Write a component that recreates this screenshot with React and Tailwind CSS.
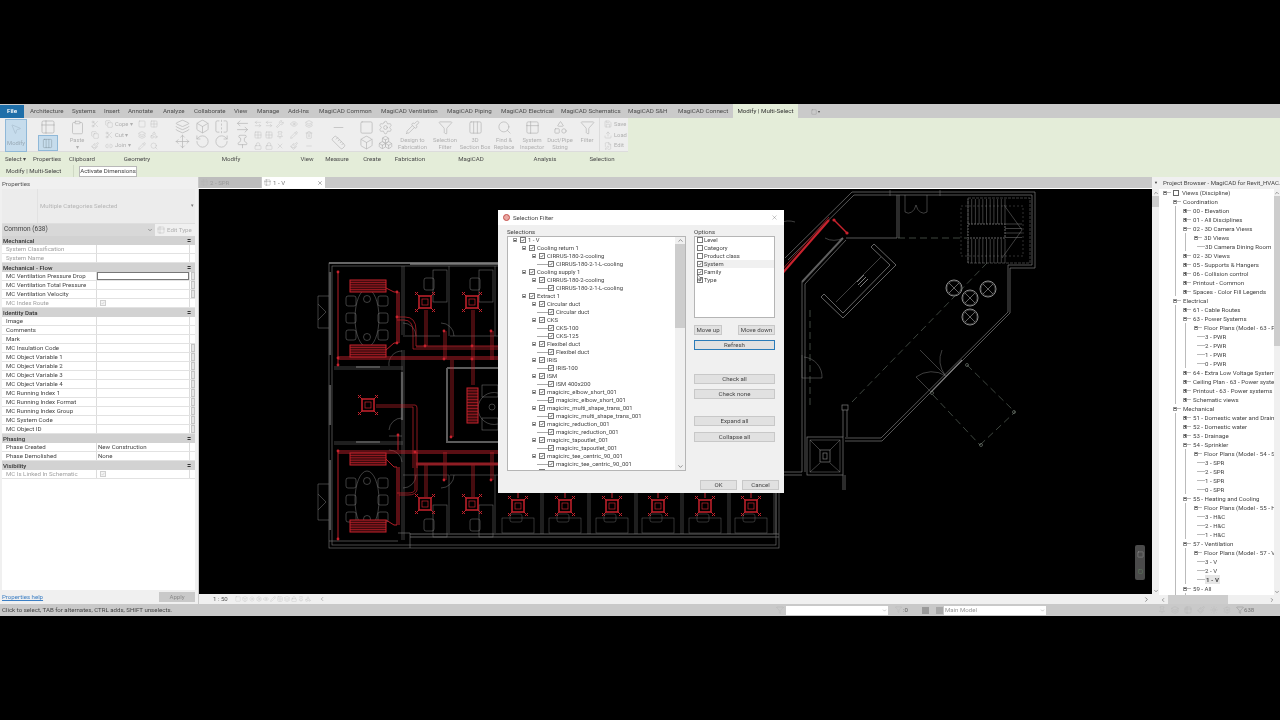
import React from "react";
import {
  MousePointer2, Clipboard, Scissors, Copy, Paintbrush, Link2, Square, Layers, Move, RotateCw, RotateCcw, ArrowLeftRight,
  FlipHorizontal, Grid2x2, Pin, X, Lock, Wrench, Trash2, Eye, Pencil, Ruler, Box, Boxes, Shapes, Search, Filter, Save, Upload,
  FilePen, Funnel, Columns3, Table2, ChevronDown, ChevronUp, ChevronLeft, ChevronRight, Sun, Settings, Pipette, Minus,
} from "lucide-react";

const tabs = [
  ["Architecture", "w-[42px]"], ["Systems", "w-[32px]"], ["Insert", "w-[24px]"], ["Annotate", "w-[35px]"], ["Analyze", "w-[31px]"],
  ["Collaborate", "w-[40px]"], ["View", "w-[23px]"], ["Manage", "w-[31px]"], ["Add-Ins", "w-[31px]"], ["MagiCAD Common", "w-[62px]"],
  ["MagiCAD Ventilation", "w-[66px]"], ["MagiCAD Piping", "w-[54px]"], ["MagiCAD Electrical", "w-[60px]"], ["MagiCAD Schematics", "w-[67px]"],
  ["MagiCAD S&H", "w-[50px]"], ["MagiCAD Connect", "w-[55px]"],
];

const G = "#b4b4b4";
const Ic = ({ I, s = 9 }) => <I size={s} color={G} strokeWidth={1.1} className="shrink-0" />;

function Small({ I, t }) {
  return (
    <div className="flex items-center gap-[2px] h-[11px] text-[5.8px] text-[#b0b0b0]">
      <Ic I={I} s={8} />
      {t && <span>{t}</span>}
    </div>
  );
}

function Big({ I, t, w = "w-[30px]", s = 15 }) {
  return (
    <div className={`flex flex-col items-center ${w} text-[5.8px] leading-[7px] text-[#b0b0b0] text-center`}>
      <div className="h-[19px] flex items-center"><Ic I={I} s={s} /></div>
      {t.map((x) => <span key={x} className="whitespace-nowrap">{x}</span>)}
    </div>
  );
}

function Col({ items, w = "" }) {
  return <div className={`flex flex-col ${w}`}>{items.map((x, i) => <Small key={i} I={x[0]} t={x[1]} />)}</div>;
}

const ribbonLabels = [
  ["Select ▾", "w-[33px] pl-[5px]"], ["Properties", "w-[26px]"], ["Clipboard", "w-[46px]"], ["Geometry", "w-[64px]"], ["Modify", "w-[124px]"],
  ["View", "w-[28px]"], ["Measure", "w-[32px]"], ["Create", "w-[38px]"], ["Fabrication", "w-[38px]"], ["MagiCAD", "w-[84px]"], ["Analysis", "w-[64px]"], ["Selection", "w-[50px]"],
];

function Ribbon() {
  return (
    <div className="h-[47px] bg-[#e4edd9] flex flex-col">
      <div className="h-[34px] flex">
        <div className="w-[628px] bg-[#eeeeee] flex items-stretch border-b border-[#dcdcdc]">
          <div className="w-[33px] pl-[5px] pt-[1px]">
            <div className="w-[22px] h-[33px] bg-[#c6dcec] border border-[#8fb8d8] flex flex-col items-center text-[5.8px] text-[#98a8b4]">
              <MousePointer2 size={12} color="#9fb2c2" strokeWidth={1} className="mt-[3px]" />
              <span className="mt-[4px]">Modify</span>
            </div>
          </div>
          <div className="w-[29px] pt-[1px] flex flex-col items-center">
            <Ic I={Table2} s={16} />
            <div className="w-[20px] h-[17px] bg-[#c6dcec] border border-[#8fb8d8] flex items-center justify-center">
              <Columns3 size={11} color="#7d8c98" strokeWidth={1} />
            </div>
          </div>
          <div className="w-[29px]"><Big I={Clipboard} t={["Paste", "▾"]} /></div>
          <Col items={[[Scissors], [Copy], [Paintbrush]]} w="w-[14px] pt-[1px]" />
          <Col items={[[Copy, "Cope ▾"], [Scissors, "Cut ▾"], [Link2, "Join ▾"]]} w="w-[33px] pt-[1px]" />
          <Col items={[[Square], [Layers], [Pencil]]} w="w-[12px] pt-[1px]" />
          <Col items={[[Grid2x2], [Shapes], [Search]]} w="w-[22px] pt-[1px]" />
          <div className="w-[20px] flex flex-col items-center pt-[1px]"><Ic I={Layers} s={15} /><Ic I={Move} s={15} /></div>
          <div className="w-[20px] flex flex-col items-center pt-[1px]"><Ic I={Box} s={15} /><Ic I={RotateCcw} s={15} /></div>
          <div className="w-[18px] flex flex-col items-center pt-[1px]"><Ic I={FlipHorizontal} s={15} /><Ic I={RotateCw} s={15} /></div>
          <div className="w-[24px] flex flex-col items-center pt-[1px]"><Ic I={ArrowLeftRight} s={15} /><Ic I={Pin} s={15} /></div>
          <Col items={[[ArrowLeftRight], [Grid2x2], [Lock]]} w="w-[11px] pt-[1px]" />
          <Col items={[[ArrowLeftRight], [Grid2x2], [Lock]]} w="w-[11px] pt-[1px]" />
          <Col items={[[Wrench], [Pin], [X]]} w="w-[14px] pt-[1px]" />
          <Col items={[[Eye], [Pencil], [Paintbrush]]} w="w-[15px] pt-[1px]" />
          <Col items={[[Layers], [Trash2], [Minus]]} w="w-[15px] pt-[1px]" />
          <div className="w-[36px] flex flex-col items-center pt-[2px]"><Ic I={Minus} s={15} /><Ic I={Ruler} s={15} /></div>
          <div className="w-[40px] flex gap-[4px] pt-[2px] pl-[3px]">
            <div className="flex flex-col"><Ic I={Square} s={15} /><Ic I={Box} s={15} /></div>
            <div className="flex flex-col"><Ic I={Settings} s={15} /><Ic I={Boxes} s={15} /></div>
          </div>
          <Big I={Pipette} t={["Design to", "Fabrication"]} w="w-[33px]" />
          <Big I={Filter} t={["Selection", "Filter"]} w="w-[32px]" />
          <Big I={Columns3} t={["3D", "Section Box"]} w="w-[28px]" />
          <Big I={Search} t={["Find &", "Replace"]} w="w-[30px]" />
          <Big I={Table2} t={["System", "Inspector"]} w="w-[26px]" />
          <Big I={Shapes} t={["Duct/Pipe", "Sizing"]} w="w-[30px]" />
          <Big I={Funnel} t={["Filter"]} w="w-[24px]" />
          <div className="flex flex-col border-l border-[#dcdcdc] pl-[4px] pt-[1px]">
            <Small I={Save} t="Save" /><Small I={Upload} t="Load" /><Small I={FilePen} t="Edit" />
          </div>
        </div>
      </div>
      <div className="h-[13px] flex items-center text-[6.1px] text-[#4a4a4a]">
        {ribbonLabels.map(([t, w]) => (
          <div key={t} className={`${w} ${t.startsWith("Select ") ? "text-left" : "text-center"} shrink-0 whitespace-nowrap`}>{t}</div>
        ))}
      </div>
    </div>
  );
}

const C = "#7c7c7c";
const R = "#c8222d";
const DR = "#8f1d24";

function Diffuser({ x, y }) {
  return (
    <g stroke={R} fill="none" strokeWidth="1">
      <rect x={x - 6} y={y - 6} width="12" height="12" strokeWidth="1.5" />
      <rect x={x - 3} y={y - 3} width="6" height="6" strokeWidth="0.7" />
      <path d={`M${x - 6} ${y - 6}L${x - 10} ${y - 10}M${x + 6} ${y - 6}L${x + 10} ${y - 10}M${x - 6} ${y + 6}L${x - 10} ${y + 10}M${x + 6} ${y + 6}L${x + 10} ${y + 10}`} />
      <path d={`M${x - 10} ${y - 7}L${x - 7} ${y - 10}M${x + 10} ${y - 7}L${x + 7} ${y - 10}M${x - 10} ${y + 7}L${x - 7} ${y + 10}M${x + 10} ${y + 7}L${x + 7} ${y + 10}`} />
    </g>
  );
}

function Grille({ x, y, w = 36, h = 12 }) {
  const n = Math.floor(h / 3);
  return (
    <g stroke={R} strokeWidth="0.7" fill="#3a0a0d">
      <rect x={x} y={y} width={w} height={h} strokeWidth="1" />
      {Array.from({ length: n }).map((_, i) => (
        <line key={i} x1={x} x2={x + w} y1={y + (i + 1) * (h / (n + 1))} y2={y + (i + 1) * (h / (n + 1))} />
      ))}
    </g>
  );
}

function Table({ y }) {
  return (
    <g stroke={C} strokeWidth="0.5" fill="none">
      <ellipse cx="367" cy={y} rx="12" ry="29" />
      <circle cx="367" cy={y - 19} r="3.5" />
      <circle cx="367" cy={y + 19} r="3.5" />
      {[-17, 0, 17].map((d) => (
        <g key={d}>
          <rect x="346" y={y + d - 5} width="10" height="10" rx="2" />
          <rect x="378" y={y + d - 5} width="10" height="10" rx="2" />
        </g>
      ))}
    </g>
  );
}

function Desk({ x, y, flip }) {
  return (
    <g stroke={C} strokeWidth="0.5" fill="none">
      <rect x={x} y={y} width="14" height="32" />
      <rect x={x - 9} y={y + (flip ? 14 : 8)} width="10" height="12" rx="2" />
    </g>
  );
}

function Drawing() {
  return (
    <svg viewBox="199 189 953 405" className="absolute inset-0 w-full h-full">
      <g stroke={C} strokeWidth="0.6" fill="none">
        <rect x="329" y="263" width="450" height="285" />
        <rect x="332" y="266" width="444" height="279" />
        <path d="M329 263H500M410 264H500" strokeWidth="1.4" />
        <path d="M330 272V355M330 385V425M330 460V530" strokeWidth="2.2" stroke="#505050" />
        <path d="M402 266V335M402 350V540M404 266V335M404 350V540" strokeWidth="0.5" />
        <path d="M449 266V336M495 266V336M403 336H440M450 336H498" strokeWidth="0.5" />
        <path d="M334 367H403M334 369H403M334 442H403M334 444H403" strokeWidth="0.5" />
        <path d="M356 367H380M356 442H380" strokeWidth="1.8" stroke="#505050" />
        <path d="M447 368V442H498M447 368H498" strokeWidth="2" stroke="#5c5c5c" />
        <path d="M402 372V420" strokeWidth="2.2" stroke="#5c5c5c" />
        <path d="M389 366A13 13 0 0 1 402 351M389 430A13 13 0 0 1 402 418M389 436H402M402 462A13 13 0 0 0 389 450" strokeWidth="0.5" />
        <path d="M403 475H449M449 475V533M450 475H498M495 475V533" strokeWidth="0.5" />
        <path d="M416 336A13 13 0 0 0 403 323M416 475A13 13 0 0 1 403 488" strokeWidth="0.5" />
        <path d="M454 336A13 13 0 0 0 441 323M454 475A13 13 0 0 1 441 488" strokeWidth="0.5" />
        <path d="M410 534H779M410 537H779" strokeWidth="1.1" stroke="#5f5f5f" />
        <path d="M398 533H410V548M329 541H398" />
        <path d="M329 296H318V328H329M318 304L326 312L318 320M329 484H318V520H329M318 494L326 502L318 510" strokeWidth="0.5" />
      </g>
      <Table y={318} />
      <Table y={500} />
      <Desk x={433} y={270} />
      <Desk x={479} y={270} />
      <Desk x={433} y={505} flip />
      <Desk x={479} y={505} flip />
      <g stroke={C} strokeWidth="0.5" fill="none">
        <rect x="482" y="385" width="16" height="12" />
        <rect x="482" y="418" width="16" height="12" />
        <path d="M498 393A16 16 0 0 0 478 408A16 16 0 0 0 498 424" />
        <circle cx="492" cy="407" r="3" />
      </g>
      <g stroke={R} fill="none" strokeWidth="0.9">
        <path d="M338 272V365M338 359H500M338 357H500" />
        <path d="M386 288L394 292H397V343H394L386 350M399 292V343" />
        <path d="M397 317H405Q416 317 416 330V346H500M397 320H404Q413 320 413 332V349H500" strokeWidth="0.7" />
        <path d="M425 310V346M427 310V346M472 310V385M474 310V385" strokeWidth="0.7" />
        <path d="M444 331V359M446 331V359M491 331V360M493 331V360M451 360V437M453 360V437" strokeWidth="0.7" />
        <path d="M376 405H415Q417 405 417 408V468M376 407H413V468" strokeWidth="0.7" />
        <path d="M338 451H498M338 453H498M338 451V540" />
        <path d="M415 452V490Q414 493 408 493H397M417 452V490Q416 495 408 495H399" strokeWidth="0.7" />
        <path d="M386 520L394 525H397V467H394L386 459M399 467V525M398 435V450" />
        <path d="M425 463V497M427 463V497M472 463V497M474 463V497M444 452V480M446 452V480M491 452V480M493 452V480" strokeWidth="0.7" />
      </g>
      <path d="M416 464H500" stroke={DR} strokeWidth="3" />
      <path d="M416 347H500" stroke={DR} strokeWidth="1.2" />
      <g fill={R}>
        {[[338, 272], [338, 358], [338, 365], [338, 451], [338, 539], [397, 292], [397, 343], [444, 331], [491, 331], [444, 359], [451, 437], [397, 317], [444, 480], [491, 480], [398, 435], [425, 346], [472, 346], [415, 452], [472, 359]].map(([x, y], i) => (
          <circle key={i} cx={x} cy={y} r="1.4" />
        ))}
      </g>
      <Grille x={350} y={280} />
      <Grille x={350} y={345} />
      <Grille x={350} y={453} />
      <Grille x={350} y={520} />
      <Grille x={467} y={388} w={11} h={35} />
      <Diffuser x={425} y={302} />
      <Diffuser x={472} y={302} />
      <Diffuser x={368} y={405} />
      <Diffuser x={425} y={504} />
      <Diffuser x={472} y={504} />
      {[518, 565, 612, 658, 705, 751].map((x) => (
        <g key={x}>
          <Diffuser x={x} y={506} />
          <path d={`M${x} 490V498`} stroke={R} />
          <path d={`M${x + 23} 490V534M${x + 25} 490V534`} stroke={C} strokeWidth="0.5" />
          <rect x={x - 16} y={518} width="32" height="15" stroke={C} strokeWidth="0.4" fill="none" />
          <rect x={x - 8} y={514} width="12" height="8" rx="2" stroke={C} strokeWidth="0.4" fill="none" />
        </g>
      ))}

      {/* right wing */}
      <g stroke={C} strokeWidth="0.7" fill="none">
        <path d="M785 258L852 192H1035V268H1010V313L882 441H845" />
        <path d="M788 260L854 195H1032V265H1008V312L881 438H845" />
        <path d="M802 472V282L843 238" />
        <path d="M805 472V284L846 240" />
        <path d="M802 282L843 238" stroke="#5f5f5f" strokeWidth="2" />
        <path d="M897 195V238M899 195V238M846 238H897" />
        <path d="M905 195V212A8 12 0 0 0 916 205A8 12 0 0 0 927 212V195M890 190V196M940 190V196" strokeWidth="0.5" />
        <path d="M782 260A14 14 0 0 1 795 222M825 238A14 10 0 0 0 843 238" strokeWidth="0.5" />
        <path d="M874 244L896 265L843 318L821 297L824 294L843 313L890 265L871 247Z" strokeWidth="0.8" />
        <path d="M881 257L836 302" strokeWidth="0.5" />
        <path d="M858 285L866 277M860 287L868 279M857 282L864 275" strokeWidth="1" />
        <rect x="807" y="437" width="36" height="38" />
        <rect x="810" y="440" width="30" height="32" strokeWidth="0.5" />
        <path d="M810 440L820 450M840 440L830 450M810 472L820 463M840 472L830 463" strokeWidth="0.5" />
        <rect x="820" y="450" width="10" height="12" />
        <rect x="823" y="453" width="4" height="6" />
        <rect x="842" y="405" width="6" height="5" />
        <path d="M843 410V437M847 410V437" />
        <path d="M802 472H779M802 475H781M845 475V490M843 475V490" />
        <path d="M802 355V378H822A20 20 0 0 0 804 357" strokeWidth="0.5" />
        <path d="M942 350A26 26 0 0 0 945 375L920 350M946 376A26 26 0 0 0 916 377L931 392" strokeWidth="0.5" />
        <path d="M931 392L962 360" strokeWidth="1.1" />
        {[[954, 288], [988, 289], [970, 298], [970, 317]].map(([x, y]) => (
          <g key={x + "-" + y} stroke="#8c8c8c">
            <circle cx={x} cy={y} r="8" strokeWidth="1" />
            <circle cx={x} cy={y} r="7" strokeWidth="0.4" />
            <path d={`M${x - 5} ${y - 5}L${x + 5} ${y + 5}M${x + 5} ${y - 5}L${x - 5} ${y + 5}`} strokeWidth="0.7" />
          </g>
        ))}
        <rect x="968" y="198" width="62" height="65" strokeWidth="0.5" strokeDasharray="3 1" />
        <rect x="961" y="206" width="62" height="50" strokeWidth="0.4" strokeDasharray="2 2" />
      </g>
      <g stroke={C} strokeWidth="0.5">
        {Array.from({ length: 11 }).map((_, i) => (
          <g key={i}>
            <line x1={968 + i * 3.7} x2={968 + i * 3.7} y1="199" y2="224" />
            <line x1={968 + i * 3.7} x2={968 + i * 3.7} y1="239" y2="263" />
          </g>
        ))}
        {Array.from({ length: 4 }).map((_, i) => (
          <line key={i} x1="1005" x2="1022" y1={224 + i * 4.5} y2={224 + i * 4.5} />
        ))}
      </g>
      <rect x="968" y="224" width="37" height="14" fill="#000" stroke="#666" strokeWidth="1" strokeDasharray="2 1" />
      <path d="M1004 205L1022 230L1002 258" stroke={C} strokeWidth="0.5" fill="none" />
      <g stroke="#68756a" strokeWidth="0.6" strokeDasharray="7 4" fill="none">
        <path d="M898 238H967M810 310V408M852 402L987 263M933 395L980 445M967 365L1015 412M980 445L1015 412" />
      </g>
      <g stroke="#7f8a80" strokeWidth="0.6" fill="none">
        <circle cx="932" cy="393" r="1.5" /><circle cx="967" cy="365" r="1.5" /><circle cx="1014" cy="412" r="1.5" /><circle cx="981" cy="445" r="1.5" />
      </g>
      <path d="M780 276L829 220" stroke={R} strokeWidth="2.2" fill="none" />
      <path d="M780 272L829 217" stroke={DR} strokeWidth="1" fill="none" />
      <path d="M834 220L847 233" stroke={R} strokeWidth="1.4" fill="none" />
      <circle cx="834" cy="220" r="1.6" fill={R} />
      <circle cx="847" cy="233" r="1.6" fill={R} />
    </svg>
  );
}

const rows = [
  ["h", "Mechanical"], ["d", "System Classification"], ["d", "System Name"], ["h", "Mechanical - Flow"],
  ["s", "MC Ventilation Pressure Drop", "", true], ["r", "MC Ventilation Total Pressure", "", true], ["r", "MC Ventilation Velocity", "", true], ["c", "MC Index Route"],
  ["h", "Identity Data"], ["r", "Image"], ["r", "Comments"], ["r", "Mark"], ["r", "MC Insulation Code", "", true],
  ["r", "MC Object Variable 1", "", true], ["r", "MC Object Variable 2", "", true], ["r", "MC Object Variable 3", "", true], ["r", "MC Object Variable 4", "", true],
  ["r", "MC Running Index 1", "", true], ["r", "MC Running Index Format", "", true], ["r", "MC Running Index Group", "", true], ["r", "MC System Code", "", true], ["r", "MC Object ID", "", true],
  ["h", "Phasing"], ["r", "Phase Created", "New Construction"], ["r", "Phase Demolished", "None"],
  ["h", "Visibility"], ["c", "MC Is Linked In Schematic"],
];

const CheckSvg = ({ c = "#555", w = "1.3" }) => (
  <svg viewBox="0 0 8 8" className="w-full h-full block"><path d="M1.2 4.2L3.2 6.2L6.8 1.6" fill="none" stroke={c} strokeWidth={w} /></svg>
);

function PropRow({ r }) {
  const [k, a, b, btn] = r;
  if (k === "h") {
    return (
      <div className="h-[9px] bg-[#d2d2d2] flex items-center justify-between px-[1px] pr-[4px] font-medium text-[#333]">
        <span>{a}</span><span className="text-[5px] leading-none">≑</span>
      </div>
    );
  }
  const dis = k === "d" || k === "c";
  return (
    <div className="h-[9px] flex border-b border-[#e2e2e2] bg-white">
      <div className={`w-[95px] pl-[4px] border-r border-[#dcdcdc] leading-[8px] whitespace-nowrap ${dis ? "text-[#a0a0a0]" : "text-[#444]"}`}>{a}</div>
      <div className={`w-[92px] pl-[1px] leading-[8px] text-[#444] flex items-center ${k === "s" ? "border border-[#777]" : ""}`}>
        {b}
        {k === "c" && <div className="ml-[2px] w-[6px] h-[6px] border-[0.5px] border-[#cfcfcf] bg-[#f4f4f4]"><CheckSvg c="#bbb" w="1" /></div>}
      </div>
      <div className="w-[6px] border-l border-[#dcdcdc] flex justify-center">
        {btn && <div className="w-[4px] h-[8px] bg-[#e6e6e6] border-[0.5px] border-[#c4c4c4]" />}
      </div>
    </div>
  );
}

function Left() {
  return (
    <div className="w-[198px] shrink-0 flex flex-col bg-[#f0f0f0] pl-[2px] pr-[3px] text-[6.1px]">
      <div className="h-[12px] flex items-center text-[#555] pt-[1px]">Properties</div>
      <div className="h-[35px] flex bg-[#ececec] items-center text-[#b5b5b5] border-b border-[#dedede]">
        <div className="w-[36px] h-full border-r border-[#e2e2e2]" />
        <span className="pl-[2px] grow">Multiple Categories Selected</span>
        <span className="text-[5px] pr-[1px] text-[#777]">▾</span>
      </div>
      <div className="h-[12px] flex">
        <div className="w-[153px] bg-[#d8d8d8] flex items-center justify-between pl-[2px] pr-[2px] text-[#444] text-[6.5px]">
          <span>Common (638)</span><ChevronDown size={6} color="#555" />
        </div>
        <div className="grow flex items-center gap-[2px] pl-[2px] text-[#b0b0b0]">
          <Ic I={Table2} s={8} /><span>Edit Type</span>
        </div>
      </div>
      <div className="flex flex-col">
        {rows.map((r, i) => <PropRow key={i} r={r} />)}
      </div>
      <div className="grow bg-white" />
      <div className="h-[14px] flex items-center justify-between">
        <span className="text-[#3c7fc4] underline">Properties help</span>
        <div className="w-[36px] h-[10px] bg-[#c9c9c9] flex items-center justify-center text-[#8a8a8a]">Apply</div>
      </div>
    </div>
  );
}

const tree = [
  [0, "1 - V"], [1, "Cooling return 1"], [2, "CIRRUS-180-2-cooling"], [3, "CIRRUS-180-2-1-L-cooling"], [1, "Cooling supply 1"], [2, "CIRRUS-180-2-cooling"], [3, "CIRRUS-180-2-1-L-cooling"],
  [1, "Extract 1"], [2, "Circular duct"], [3, "Circular duct"], [2, "CKS"], [3, "CKS-100"], [3, "CKS-125"], [2, "Flexibel duct"], [3, "Flexibel duct"], [2, "IRIS"], [3, "IRIS-100"], [2, "ISM"], [3, "ISM 400x200"],
  [2, "magicirc_elbow_short_001"], [3, "magicirc_elbow_short_001"], [2, "magicirc_multi_shape_trans_001"], [3, "magicirc_multi_shape_trans_001"], [2, "magicirc_reduction_001"], [3, "magicirc_reduction_001"],
  [2, "magicirc_tapoutlet_001"], [3, "magicirc_tapoutlet_001"], [2, "magicirc_tee_centric_90_001"], [3, "magicirc_tee_centric_90_001"], [2, "magicirc_transition_001"],
];

const pad = ["pl-[5px]", "pl-[14px]", "pl-[24px]", "pl-[29px]"];

const Exp = ({ plus }) => (
  <span className="relative w-[4px] h-[4px] border-[0.5px] border-[#999] shrink-0 flex items-center justify-center bg-white">
    <span className="w-[3px] h-[0.5px] bg-[#555]" />
    {plus && <span className="absolute w-[0.5px] h-[3px] bg-[#555]" />}
  </span>
);

const Cb = ({ on = true }) => (
  <span className="w-[6px] h-[6px] border-[0.5px] border-[#777] bg-white shrink-0 block">{on && <CheckSvg c="#333" />}</span>
);

function Btn({ t, w = "w-full", extra = "border-[0.5px] border-[#c8c8c8]" }) {
  return <div className={`h-[10px] ${w} bg-[#e1e1e1] flex items-center justify-center text-[#444] ${extra}`}>{t}</div>;
}

function Dialog() {
  return (
    <div className="absolute left-[299px] top-[21px] w-[286px] h-[283px] bg-[#f0f0f0] flex flex-col text-[6.1px] text-[#444]">
      <div className="h-[15px] bg-white flex items-center px-[5px] shrink-0">
        <span className="w-[7px] h-[7px] rounded-full bg-[#e9a7a2] border border-[#c44f4a] mr-[3px]" />
        <span>Selection Filter</span>
        <X size={7} color="#444" strokeWidth={1} className="ml-auto mr-[1px]" />
      </div>
      <div className="flex pl-[9px]">
        <div className="w-[179px] flex flex-col">
          <div className="h-[11px] leading-[11px] pt-[1px]">Selections</div>
          <div className="h-[235px] bg-white border-[0.5px] border-[#b5b5b5] flex overflow-hidden">
            <div className="w-[169px] -mt-[1px] overflow-hidden">
              {tree.map(([l, t], i) => (
                <div key={i} className={`h-[8px] flex items-center whitespace-nowrap ${pad[l]}`}>
                  {l < 3 ? <Exp /> : <span className="w-[11px] h-[0.5px] bg-[#aaa] shrink-0" />}
                  {l < 3 && <span className="w-[3px] shrink-0" />}
                  <Cb />
                  <span className="pl-[2px] text-[5.9px]">{t}</span>
                </div>
              ))}
            </div>
            <div className="w-[10px] bg-[#f0f0f0] flex flex-col items-center">
              <ChevronUp size={7} color="#555" className="shrink-0" />
              <div className="w-full h-[84px] bg-[#cdcdcd]" />
              <div className="grow" />
              <ChevronDown size={7} color="#555" className="shrink-0" />
            </div>
          </div>
        </div>
        <div className="w-[81px] ml-[8px] flex flex-col">
          <div className="h-[11px] leading-[11px] pt-[1px]">Options</div>
          <div className="h-[82px] bg-white border-[0.5px] border-[#b5b5b5] pl-[2px]">
            {[["Level", false], ["Category", false], ["Product class", false], ["System", true, "bg-[#f0f0f0]"], ["Family", true], ["Type", true]].map(([t, on, bg]) => (
              <div key={t} className={`h-[8px] -translate-y-[1px] flex items-center gap-[1px] ${bg || ""}`}><Cb on={on} /><span className="text-[5.9px]">{t}</span></div>
            ))}
          </div>
          <div className="flex justify-between mt-[7px]">
            <Btn t="Move up" w="w-[28px]" /><Btn t="Move down" w="w-[37px]" />
          </div>
          <Btn t="Refresh" extra="mt-[5px] border border-[#2b7bb8]" />
          <Btn t="Check all" extra="mt-[24px] border-[0.5px] border-[#c8c8c8]" />
          <Btn t="Check none" extra="mt-[5px] border-[0.5px] border-[#c8c8c8]" />
          <Btn t="Expand all" extra="mt-[17px] border-[0.5px] border-[#c8c8c8]" />
          <Btn t="Collapse all" extra="mt-[6px] border-[0.5px] border-[#c8c8c8]" />
          <div className="flex gap-[5px] mt-[38px] pl-[6px] w-[85px]">
            <Btn t="OK" w="w-[37px]" /><Btn t="Cancel" w="w-[37px]" />
          </div>
        </div>
      </div>
      <svg viewBox="0 0 6 9" className="absolute left-[199px] top-[64px] w-[5px] h-[8px]"><path d="M0.5 0.5V7L2 5.6L3.2 8L4.3 7.5L3.2 5.2H5.2Z" fill="#fff" stroke="#222" strokeWidth="0.6" /></svg>
    </div>
  );
}

function Center() {
  return (
    <div className="grow min-w-0 flex flex-col text-[6.1px] bg-[#c9c9c9]">
      <div className="h-[12px] flex items-end shrink-0 border-b border-white">
        <div className="w-[62px] h-[11px] bg-[#bdbdbd] flex items-center pl-[2px] gap-[2px] text-[#9b9b9b] ml-[1px]"><Ic I={Table2} s={7} /> 2 - SPR</div>
        <div className="w-[63px] h-[11px] bg-white flex items-center pl-[2px] gap-[2px] text-[#777] ml-[1px]">
          <Table2 size={7} color="#666" strokeWidth={1} /> 1 - V
          <X size={6} color="#222" strokeWidth={1.4} className="ml-auto mr-[2px]" />
        </div>
      </div>
      <div className="relative h-[405px] bg-black shrink-0 overflow-hidden ml-[1px]">
        <Drawing />
        <div className="absolute left-[936px] top-[356px] w-[10px] h-[35px] bg-[#4a4a4a] rounded-[2px] flex flex-col items-center justify-around">
          <Square size={7} color="#cfcfcf" strokeWidth={1} />
          <Square size={5} color="#6fa36f" strokeWidth={1.4} />
        </div>
        <Dialog />
      </div>
      <div className="grow bg-[#f0f0f0] flex items-center pl-[14px] text-[#555] ml-[1px]">
        <span className="w-[22px]">1 : 50</span>
        <div className="flex gap-[1px]">
          {[Square, Box, Sun, Settings, Eye, Pencil, Grid2x2, Layers, Lock, Pin, Shapes].map((I, i) => <Ic key={i} I={I} s={6} />)}
        </div>
        <ChevronLeft size={6} color="#777" className="ml-[8px]" />
        <div className="grow" />
        <ChevronRight size={7} color="#444" className="mr-[2px]" />
      </div>
    </div>
  );
}

const browser = [
  [0, "Views (Discipline)", "m"], [1, "Coordination", "m"], [2, "00 - Elevation", "p"], [2, "01 - All Disciplines", "p"], [2, "02 - 3D Camera Views", "m"], [3, "3D Views", "m"], [4, "3D Camera Dining Room"],
  [2, "02 - 3D Views", "p"], [2, "05 - Supports & Hangers", "p"], [2, "06 - Collision control", "p"], [2, "Printout - Common", "p"], [2, "Spaces - Color Fill Legends", "p"],
  [1, "Electrical", "m"], [2, "61 - Cable Routes", "p"], [2, "63 - Power Systems", "m"], [3, "Floor Plans (Model - 63 - Power Systems)", "m"], [4, "3 - PWR"], [4, "2 - PWR"], [4, "1 - PWR"], [4, "0 - PWR"],
  [2, "64 - Extra Low Voltage Systems", "p"], [2, "Ceiling Plan - 63 - Power systems", "p"], [2, "Printout - 63 - Power systems", "p"], [2, "Schematic views", "p"],
  [1, "Mechanical", "m"], [2, "51 - Domestic water and Drainage", "p"], [2, "52 - Domestic water", "p"], [2, "53 - Drainage", "p"], [2, "54 - Sprinkler", "m"], [3, "Floor Plans (Model - 54 - Sprinkler)", "m"], [4, "3 - SPR"], [4, "2 - SPR"], [4, "1 - SPR"], [4, "0 - SPR"],
  [2, "55 - Heating and Cooling", "m"], [3, "Floor Plans (Model - 55 - Heating)", "m"], [4, "3 - H&C"], [4, "2 - H&C"], [4, "1 - H&C"],
  [2, "57 - Ventilation", "m"], [3, "Floor Plans (Model - 57 - Ventilation)", "m"], [4, "3 - V"], [4, "2 - V"], [4, "1 - V", "", true],
  [2, "59 - All", "m"], [3, "Floor Plans (Model - 59 - All)", "m"],
];

const bpad = ["pl-[4px]", "pl-[14px]", "pl-[24px]", "pl-[35px]", "pl-[46px]"];

function Right() {
  return (
    <div className="w-[128px] shrink-0 flex flex-col bg-[#f0f0f0] text-[6.1px] text-[#444]">
      <div className="h-[12px] flex items-center gap-[5px] pl-[2px] shrink-0 overflow-hidden whitespace-nowrap">
        <span className="text-[4px]">▼</span>
        <span>Project Browser - MagiCAD for Revit_HVAC...</span>
      </div>
      <div className="grow flex min-h-0">
        <div className="w-[7px] shrink-0 flex flex-col items-center">
          <ChevronUp size={6} color="#444" className="mt-[1px]" />
          <div className="w-full h-[11px] bg-[#cdcdcd]" />
          <div className="grow" />
          <ChevronDown size={6} color="#444" className="mb-[10px]" />
        </div>
        <div className="grow min-w-0 bg-white flex flex-col">
          <div className="h-[406px] flex overflow-hidden shrink-0">
            <div className="grow min-w-0 overflow-hidden -mt-[1px]">
              {browser.map(([l, t, e, b], i) => (
                <div key={i} className={`relative h-[9px] flex items-center whitespace-nowrap ${bpad[l]}`}>
                  {l >= 2 && <span className="absolute left-[16px] top-0 w-[0.5px] h-full bg-[#bbb]" />}
                  {l >= 3 && <span className="absolute left-[26px] top-0 w-[0.5px] h-full bg-[#bbb]" />}
                  {e ? <Exp plus={e === "p"} /> : <span className="absolute left-[38px] w-[8px] h-[0.5px] bg-[#bbb]" />}
                  {e && <span className="w-[4px] h-[0.5px] bg-[#bbb] shrink-0 mr-[2px]" />}
                  {l === 0 && <span className="w-[6px] h-[6px] border-[0.5px] border-dashed border-[#666] mr-[3px] shrink-0" />}
                  <span className={b ? "font-bold bg-[#e6e6e6] px-[1px]" : ""}>{t}</span>
                </div>
              ))}
            </div>
            <div className="w-[6px] shrink-0 bg-[#f0f0f0] flex flex-col items-center">
              <ChevronUp size={6} color="#444" className="mt-[1px]" />
              <div className="w-full h-[150px] bg-[#cdcdcd]" />
              <div className="grow" />
              <ChevronDown size={6} color="#444" />
            </div>
          </div>
          <div className="grow bg-[#f0f0f0] flex items-center">
            <ChevronLeft size={6} color="#444" className="ml-[1px]" />
            <div className="w-[60px] h-full bg-[#cdcdcd] ml-[2px]" />
            <div className="grow" />
            <ChevronRight size={6} color="#444" className="mr-[5px]" />
          </div>
        </div>
      </div>
    </div>
  );
}

export default function App() {
  return (
    <div className="w-[1280px] h-[720px] bg-black overflow-hidden flex flex-col pt-[104px] pb-[104px] blur-[0.25px] font-['Roboto',sans-serif]">
      <div className="h-[14px] bg-[#cacaca] flex items-end text-[6.2px] text-[#4d4d4d] shrink-0">
        <div className="w-[24px] h-[13px] bg-[#1f6fa9] text-white flex items-center justify-center font-semibold">File</div>
        <div className="w-[6px]" />
        {tabs.map(([t, w]) => <div key={t} className={`${w} h-[13px] leading-[13px] whitespace-nowrap shrink-0`}>{t}</div>)}
        <div className="w-[65px] h-[14px] bg-[#e4edd9] leading-[14px] text-center text-[#333] whitespace-nowrap">Modify | Multi-Select</div>
        <div className="ml-[13px] h-[13px] flex items-center gap-[1px]"><Square size={6} color="#777" strokeWidth={1} /><span className="text-[4px]">▾</span></div>
      </div>
      <Ribbon />
      <div className="h-[12px] bg-[#e4edd9] flex items-center text-[6.1px] text-[#444] shrink-0">
        <span className="w-[74px] pl-[6px] border-r border-[#cfd8c4] h-full flex items-center whitespace-nowrap">Modify | Multi-Select</span>
        <span className="ml-[5px] w-[58px] h-[11px] bg-white border-[0.5px] border-[#b8b8b8] flex items-center justify-center whitespace-nowrap">Activate Dimensions</span>
      </div>
      <div className="h-[427px] flex shrink-0 bg-[#c9c9c9]">
        <Left />
        <Center />
        <Right />
      </div>
      <div className="h-[12px] bg-[#c9c9c9] flex items-center text-[6.1px] text-[#444] shrink-0 pl-[2px]">
        <span className="w-[774px] whitespace-nowrap">Click to select, TAB for alternates, CTRL adds, SHIFT unselects.</span>
        <Ic I={Filter} s={8} />
        <div className="w-[102px] h-[9px] bg-white ml-[2px] flex items-center justify-end pr-[1px]"><ChevronDown size={5} color="#888" /></div>
        <span className="ml-[7px] flex items-center gap-[1px] text-[#666] w-[14px] whitespace-nowrap"><Ic I={Filter} s={7} />:0</span>
        <div className="ml-[13px] w-[7px] h-[7px] bg-[#9a9a9a]" />
        <div className="ml-[7px] w-[7px] h-[7px] bg-[#a8a8a8]" />
        <div className="w-[102px] h-[9px] bg-white ml-[1px] flex items-center justify-between pl-[1px] pr-[1px] text-[#999]">Main Model <ChevronDown size={5} color="#888" /></div>
        <div className="ml-[112px] flex items-center gap-[5px]">
          {[Pin, Layers, Table2, Paintbrush, Sun, Settings].map((I, i) => <Ic key={i} I={I} s={8} />)}
          <span className="flex items-center text-[#777]"><Funnel size={8} color="#777" strokeWidth={1} />638</span>
        </div>
      </div>
    </div>
  );
}
